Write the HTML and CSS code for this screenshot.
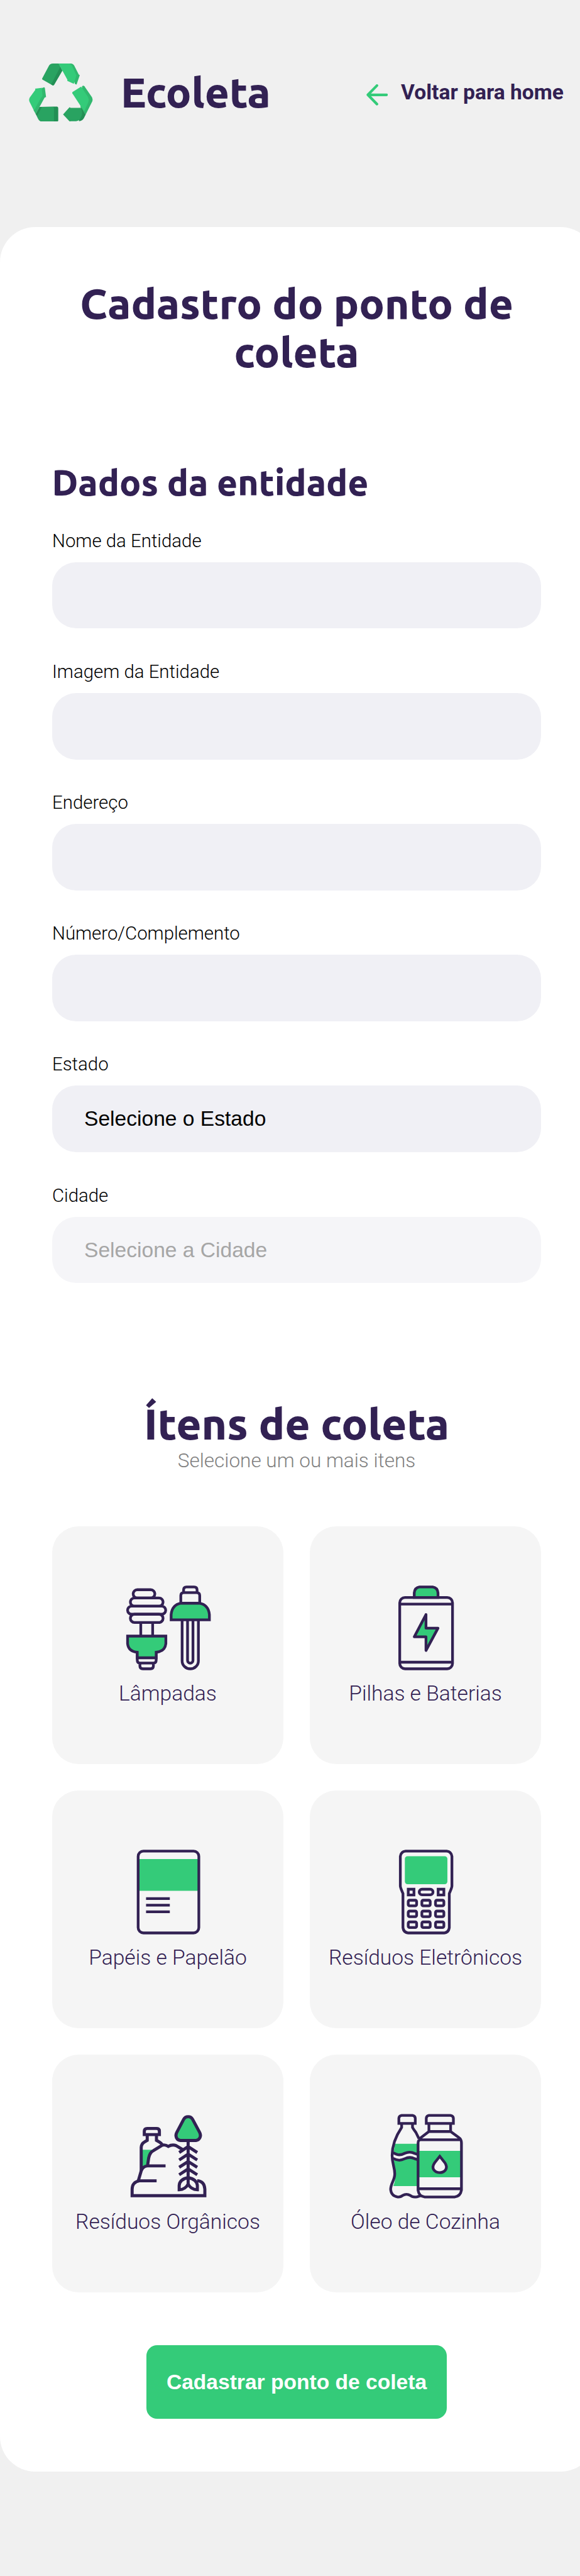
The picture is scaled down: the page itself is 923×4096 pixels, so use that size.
FILE: index.html
```html
<!DOCTYPE html>
<html lang="pt-BR">
<head>
<meta charset="utf-8">
<title>Ecoleta</title>
<link rel="stylesheet" href="styles.css">
</head>
<body>
<header class="header">
  <svg class="logo" viewBox="48 42 435 396">
    <path fill="#29a361" d="M138 145L183 60Q192 42 212 42H252L276 90L220 187Q216 193 208 190L142 152Q137 149 138 145Z"/>
    <path fill="#238f55" d="M262 65L276 90L220 187Q216 193 208 190L200 184Z"/>
    <path fill="#31b86e" d="M320 42H334Q350 43 357 56L388 117L395 121L373 186L362 181Z"/>
    <path fill="#34cb79" d="M250 42H320Q333 43 340 54L366 110Q368 117 372 123L354 180L309 160L311 153Z"/>
    <path fill="#31b86e" d="M411 196Q420 189 427 197L477 270Q486 285 480 300L435 390L400 340Z"/>
    <path fill="#34cb79" d="M346 236L404 199Q434 242 452 272Q460 290 453 307L425 369L344 244Q342 240 346 236Z"/>
    <path fill="#238f55" d="M385 346L407 345L435 390L424 413Q412 435 390 435Z"/>
    <path fill="#29a361" d="M281 389L325 340L333 344H401L408 360Q414 380 407 400Q395 434 370 435H333L327 438Z"/>
    <path fill="#31b86e" d="M90 345L136 210L151 204Q157 205 157 210L165 270L155 275L94 386L80 360Z"/>
    <path fill="#34cb79" d="M90 213L142 207Q135 209 136 215L141 264Q135 268 131 276L82 362L52 302Q46 288 54 273L92 221Z"/>
    <path fill="#238f55" d="M120 338L215 336H240Q248 338 248 346V430Q247 438 240 438H215L103 402L94 386Z"/>
    <path fill="#29a361" d="M137 338H212Q219 340 219 347V429Q219 436 213 438H134Q120 436 113 424L102 402Z"/>
  </svg>
  <span class="brand">Ecoleta</span>
  <a class="back">
    <svg class="arrow" viewBox="0 0 49 48"><path d="M46 24H4M24 3L3.500 24L24 45" fill="none" stroke="#34cb79" stroke-width="6" stroke-linecap="round" stroke-linejoin="round"/></svg>
    <span class="back-text">Voltar para home</span>
  </a>
</header>
<form class="panel">
  <h1 class="title">Cadastro do ponto de<br>coleta</h1>
  <h2 class="subtitle">Dados da entidade</h2>
  <div class="fields">
    <label class="field"><span>Nome da Entidade</span><input type="text"></label>
    <label class="field"><span>Imagem da Entidade</span><input type="text"></label>
    <label class="field"><span>Endereço</span><input type="text"></label>
    <label class="field"><span>Número/Complemento</span><input type="text"></label>
    <label class="field"><span>Estado</span><select><option>Selecione o Estado</option></select></label>
    <label class="field"><span>Cidade</span><select disabled><option>Selecione a Cidade</option></select></label>
  </div>
  <h2 class="items-title">Ítens de coleta</h2>
  <p class="hint">Selecione um ou mais itens</p>
  <div class="items">
    <div class="item">
      <svg class="icon" viewBox="47 36 576 576">
        <rect x="98" y="65" width="148" height="56" rx="28"/>
        <rect x="79" y="121" width="223" height="56" rx="28"/>
        <rect x="60" y="177" width="260" height="55" rx="27.500"/>
        <rect x="79" y="232" width="223" height="56" rx="28"/>
        <path d="M150 288V381M231 288V381"/>
        <path d="M126 490V545Q126 565 146 565H235Q255 565 255 545V490M144 565V585Q144 604 164 604H216Q236 604 236 585V565"/>
        <path class="g" d="M60 381H321V432Q315 485 255 491V529H126V491Q66 485 60 432Z"/>
        <path d="M442 84V66Q442 46 462 46H514Q534 46 534 66V84M423 157V105Q423 85 443 85H532Q552 85 552 105V157"/>
        <path class="g" d="M357 270V235Q363 168 425 157H549Q612 168 618 235V270Z"/>
        <path d="M432 270V550A55.500 54 0 0 0 543 550V270M469 270V547A18.500 18.500 0 0 0 506 547V270"/>
      </svg>
      <span>Lâmpadas</span>
    </div>
    <div class="item">
      <svg class="icon" viewBox="-26 36 576 576">
        <path class="g" d="M185 118V86Q189 50 220 46H311Q343 50 347 86V118Z"/>
        <rect x="86" y="118" width="360" height="486" rx="36"/>
        <path d="M86 163H446M86 559H446"/>
        <path class="g j" d="M265 234V327H347L265 479V386H185Z"/>
      </svg>
      <span>Pilhas e Baterias</span>
    </div>
    <div class="item">
      <svg class="icon" viewBox="-13 66 576 576">
        <path fill="#34cb79" stroke="none" d="M72 130H486V347H72Z"/>
        <rect x="72" y="76" width="414" height="558" rx="36"/>
        <path d="M126 400H288M126 445H288M126 490H288"/>
      </svg>
      <span>Papéis e Papelão</span>
    </div>
    <div class="item">
      <svg class="icon" viewBox="-26 66 576 576">
        <path d="M90 112Q94 79 126 76H406Q438 79 442 112V315Q442 325 424 365V598Q420 630 389 634H144Q112 630 108 598V365Q90 325 90 315Z"/>
        <rect x="121" y="111" width="290" height="191" rx="18" fill="#34cb79" stroke="none"/>
        <path d="M144 336H183V375H144ZM348 336H387V375H348Z"/>
        <rect x="219" y="336" width="94" height="38" rx="19"/>
        <rect x="144" y="411" width="57" height="38" rx="9"/><rect x="237" y="411" width="57" height="38" rx="9"/><rect x="330" y="411" width="57" height="38" rx="9"/>
        <rect x="144" y="485" width="57" height="38" rx="9"/><rect x="237" y="485" width="57" height="38" rx="9"/><rect x="330" y="485" width="57" height="38" rx="9"/>
        <rect x="144" y="559" width="57" height="38" rx="9"/><rect x="237" y="559" width="57" height="38" rx="9"/><rect x="330" y="559" width="57" height="38" rx="9"/>
      </svg>
      <span>Resíduos Eletrônicos</span>
    </div>
    <div class="item">
      <svg class="icon w" viewBox="17 66 576 576">
        <path fill="#34cb79" stroke="none" d="M124 311H200L180 335L166 420L124 430Z"/>
        <path d="M144 208V186Q144 166 164 166H227Q247 166 247 186V208Z"/>
        <path d="M164 208V247L147 257Q124 270 123 295V455M227 208V247L248 259Q262 267 267 277"/>
        <path d="M103 523L123 455Q134 424 166 421H289M166 421L174 367Q181 330 206 317L265 281Q285 274 308 288Q335 273 363 284L405 310"/>
        <path d="M228 523H110Q62 532 61 580V624H557V580Q554 526 505 522"/>
        <path class="g" d="M443 86Q464 86 473 103L522 194Q531 212 524 228Q515 247 497 248H391Q372 247 363 229Q356 211 365 194L413 103Q422 86 443 86Z"/>
        <path d="M443 248V552M382 330L443 290L505 330M382 381L443 341L505 381M382 431L443 391L505 431M382 482L443 442L505 482"/>
        <path d="M443 501Q385 513 382 555V584Q424 583 443 545Q462 583 506 584V555Q502 513 443 501Z"/>
      </svg>
      <span>Resíduos Orgânicos</span>
    </div>
    <div class="item">
      <svg class="icon" viewBox="4 66 576 576">
        <path fill="#34cb79" stroke="none" d="M83 271H241V337L222 331Q183 318 154 337Q115 356 74 332ZM74 376Q115 392 154 372Q183 356 222 368L241 376V559H72Q90 520 83 470Z"/>
        <path fill="#34cb79" stroke="none" d="M241 319H537V499H241Z"/>
        <path d="M110 132V96Q112 79 129 77H203Q220 79 222 96V132ZM129 136V159C90 217 64 279 64 350C64 410 82 430 82 475C82 520 54 540 54 582Q58 627 102 633Q123 635 136 623Q162 607 188 623Q205 638 234 632L260 624M203 136V159Q210 172 226 193L247 235"/>
        <path d="M70 331C105 351 125 349 151 335Q185 320 217 336L241 344M70 370C105 388 125 384 151 372Q185 356 217 372L241 380"/>
        <path d="M297 132V96Q299 79 315 77H462Q480 79 482 96V132ZM315 136V187H463V136M315 187L247 239M463 187L520 229Q537 240 537 264V586Q530 629 490 633H287Q247 629 241 588V266Q241 243 258 243H530M241 577H537"/>
        <path fill="#f5f5f5" d="M389 356L424 400Q441 426 430 446Q418 467 389 467Q360 467 347 446Q336 426 354 400Z"/>
      </svg>
      <span>Óleo de Cozinha</span>
    </div>
  </div>
  <button class="submit" type="button">Cadastrar ponto de coleta</button>
</form>
</body>
</html>
```
FILE: styles.css
```css
* { box-sizing: border-box; }
html { background: #f0f0f0; overflow: hidden; }
body {
  margin: 0;
  height: 4096px;
  overflow: hidden;
  background: #f0f0f0;
  color: #322153;
  font-family: Roboto, sans-serif;
}
.header {
  height: 361px;
  padding: 100.8px 26px 0 46px;
  display: flex;
  align-items: flex-start;
}
.logo { width: 101.500px; height: 92.400px; flex: none; }
.brand {
  margin: 7.500px 0 0 44.500px;
  font: 800 67.200px/77px Ubuntu, "Open Sans", sans-serif;
}
.back { margin: 26px 0 0 auto; display: flex; align-items: flex-start; }
.arrow { width: 34.300px; height: 33.600px; margin-top: 7.500px; }
.back-text {
  margin-left: 21px;
  font-size: 33.600px;
  line-height: 40px;
  font-weight: 700;
  white-space: nowrap;
}
.panel {
  display: flex;
  flex-direction: column;
  align-items: center;
  width: 948px;
  height: 3569px;
  padding: 83px 87px 0 83px;
  background: #fff;
  border-radius: 56px;
}
h1, h2, p { margin: 0; }
.title, .items-title {
  font: 800 67.200px/77px Ubuntu, "Open Sans", sans-serif;
  text-align: center;
  white-space: nowrap;
}
.subtitle {
  align-self: flex-start;
  margin: 135.500px 0 0 -0.500px;
  font: 800 56.800px/66px Ubuntu, "Open Sans", sans-serif;
  white-space: nowrap;
}
.fields {
  align-self: stretch;
  margin-top: 43.300px;
  display: flex;
  flex-direction: column;
  gap: 50.900px;
}
.field { display: block; font-size: 29.400px; line-height: 34px; font-weight: 300; color: #000; }
.field span { display: block; margin-bottom: 17px; }
.field input, .field select {
  display: block;
  width: 100%;
  height: 105.700px;
  margin: 0;
  padding: 0 51px 1px;
  border: 0;
  border-radius: 38px;
  background: #f0f0f5;
  color: #000;
  font: 400 33.600px "Liberation Sans", Arial, sans-serif;
  appearance: none;
}
.field + .field { margin-top: 0.600px; }
.field select:disabled { background: #f5f5f8; color: #a6a6a6; opacity: 1; }
.items-title { margin-top: 184.600px; font-size: 69.200px; }
.hint { margin-top: 3.500px; font-size: 31.500px; line-height: 36px; font-weight: 300; color: #808080; }
.items {
  align-self: stretch;
  margin-top: 85.400px;
  display: grid;
  grid-template-columns: 1fr 1fr;
  grid-auto-rows: 378px;
  gap: 42px;
}
.item {
  display: flex;
  flex-direction: column;
  align-items: center;
  gap: 17.900px;
  padding-top: 93.800px;
  border-radius: 42px;
  background: #f5f5f5;
  font-size: 33.600px;
  line-height: 40px;
  font-weight: 300;
  white-space: nowrap;
}
.icon { width: 134.400px; height: 134.400px; overflow: visible; fill: none; stroke: #322153; stroke-width: 18.500; }
.icon.w { stroke-width: 21; }
.icon .g { fill: #34cb79; }
.icon .j { stroke-linejoin: round; }
.submit {
  flex: none;
  width: 478px;
  height: 117.600px;
  margin-top: 84px;
  padding: 0;
  border: 0;
  border-radius: 17px;
  background: #34cb79;
  color: #fff;
  font: 700 33.600px "Liberation Sans", Arial, sans-serif;
  white-space: nowrap;
}
```
